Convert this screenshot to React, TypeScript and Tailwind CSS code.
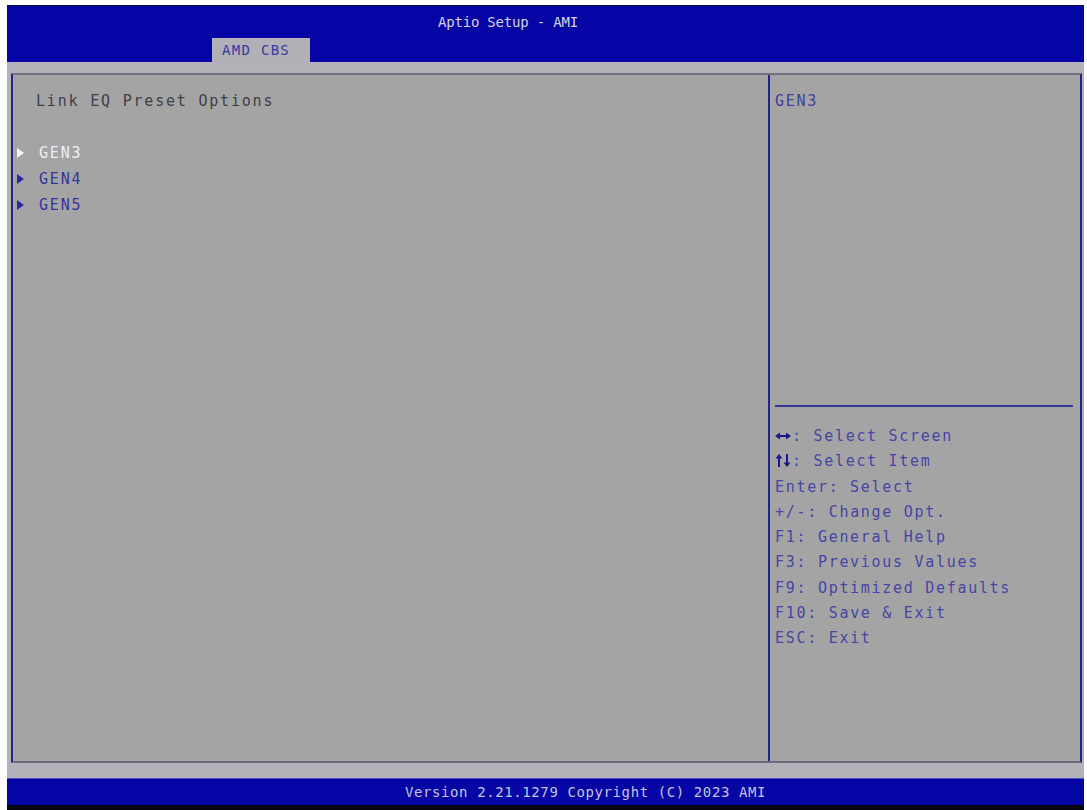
const help = [
  { k: 'lr', t: ': Select Screen' },
  { k: 'ud', t: ': Select Item' },
  { k: 'Enter', t: ': Select' },
  { k: '+/-', t: ': Change Opt.' },
  { k: 'F1', t: ': General Help' },
  { k: 'F3', t: ': Previous Values' },
  { k: 'F9', t: ': Optimized Defaults' },
  { k: 'F10', t: ': Save & Exit' },
  { k: 'ESC', t: ': Exit' },
]

const items = ['GEN3', 'GEN4', 'GEN5']

function Arrow({ color }: { color: string }) {
  return (
    <svg width="7" height="10" viewBox="0 0 7 10" className="shrink-0">
      <polygon points="0,0 7,5 0,10" fill={color} />
    </svg>
  )
}

function KeyLR() {
  return (
    <svg width="17" height="12" viewBox="0 0 17 12" className="inline-block align-[-1px]" fill="#18188a">
      <polygon points="0,6 5,2.5 5,5 8,5 8,7 5,7 5,9.5" />
      <polygon points="17,6 12,2.5 12,5 9,5 9,7 12,7 12,9.5" transform="translate(-1 0)" />
    </svg>
  )
}

function KeyUD() {
  return (
    <svg width="17" height="13" viewBox="0 0 17 13" className="inline-block align-[-1px]" fill="#18188a">
      <polygon points="4,0 7.5,4.5 5,4.5 5,13 3,13 3,4.5 0.5,4.5" />
      <polygon points="12,13 15.5,8.5 13,8.5 13,0 11,0 11,8.5 8.5,8.5" />
    </svg>
  )
}

export default function App() {
  const mono = { fontFamily: '"DejaVu Sans Mono", "Liberation Mono", monospace' }
  return (
    <div className="w-[1087px] h-[810px] bg-white pt-[5px] pl-[7px] pr-[3px] flex flex-col overflow-hidden" style={mono}>
      {/* header */}
      <div className="h-[57px] bg-[#0505a6] flex flex-col justify-between border-t border-[#101040]">
        <div className="pl-[431px] pt-[6px] text-[14px] leading-[20px] tracking-[-0.2px] text-[#d4d4e4]">Aptio Setup - AMI</div>
        <div className="ml-[205px] w-[98px] h-[24px] bg-[#b0b0b6] text-[#3a3aa0] text-[14px] leading-[24px] tracking-[1.3px] pl-[10px]">AMD CBS</div>
      </div>

      {/* body */}
      <div className="h-[716px] bg-[#b2b2b8] pt-[11px] pl-[4px] pr-[2px] pb-[15px] flex">
        <div className="flex-1 flex bg-[#a4a4a4] border-l-2 border-r-2 border-[#23238e] border-t-2 border-t-[#70707e] border-b-2 border-b-[#6a6a78]">
          {/* main pane */}
          <div className="w-[755px] pt-[13px] text-[15px] tracking-[1.8px] leading-[26px]">
            <div className="pl-[23px] text-[#3e3e4a]">Link EQ Preset Options</div>
            <div className="h-[26px]" />
            {items.map((g, i) => (
              <div key={g} className="flex items-center pl-[4px] gap-[15px]">
                <Arrow color={i === 0 ? '#f4f4f4' : '#2a2a96'} />
                <span className={i === 0 ? 'text-[#eeeeee]' : 'text-[#35359c]'}>{g}</span>
              </div>
            ))}
          </div>
          <div className="w-[2px] bg-[#23238e]" />
          {/* help pane */}
          <div className="flex-1 flex flex-col text-[15px] tracking-[1.7px]">
            <div className="h-[330px] pl-[5px] pt-[13px] leading-[26px] text-[#40409e]">GEN3</div>
            <div className="h-[2px] ml-[5px] mr-[7px] bg-[#3a3a96]" />
            <div className="pl-[5px] pt-[17px] leading-[25.3px] text-[#4646a4]">
              {help.map(h => (
                <div key={h.k} className="whitespace-pre">
                  {h.k === 'lr' ? <KeyLR /> : h.k === 'ud' ? <KeyUD /> : h.k}
                  {h.t}
                </div>
              ))}
            </div>
          </div>
        </div>
      </div>

      {/* footer */}
      <div className="h-[27px] bg-[#0505a6] border-t border-[#5050c0] text-center text-[14px] leading-[26px] tracking-[0.6px] text-[#c4c4dc] pl-[80px]">
        Version 2.21.1279 Copyright (C) 2023 AMI
      </div>
      <div className="flex-1 bg-[#050510]" />
    </div>
  )
}
